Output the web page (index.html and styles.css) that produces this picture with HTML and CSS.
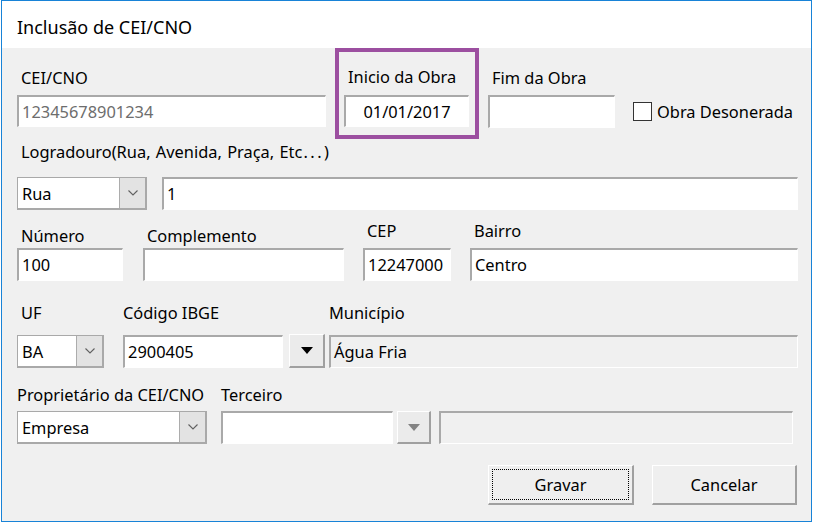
FILE: index.html
```html
<!DOCTYPE html>
<html lang="pt-BR">
<head>
<meta charset="utf-8">
<title>Inclusão de CEI/CNO</title>
<link rel="stylesheet" href="styles.css">
</head>
<body>
<div class="window">
  <div class="titlebar">Inclusão de CEI/CNO</div>
  <div class="content">
    <div class="row row1">
      <div class="field f-cei">
        <div class="label">CEI/CNO</div>
        <div class="input disabled-text">12345678901234</div>
      </div>
      <div class="highlight">
        <div class="label">Inicio da Obra</div>
        <div class="input center">01/01/2017</div>
      </div>
      <div class="field f-fim">
        <div class="label">Fim da Obra</div>
        <div class="input"></div>
      </div>
      <div class="check">
        <span class="box"></span>
        <span class="check-text">Obra Desonerada</span>
      </div>
    </div>

    <div class="row2">
      <div class="label">Logradouro(Rua<span class="wide-punct">,</span> Avenida<span class="wide-punct">,</span> Praça<span class="wide-punct">,</span> Etc<span class="dots">...</span>)</div>
      <div class="row">
        <div class="combo c-rua">
          <span class="combo-value">Rua</span>
          <span class="combo-btn"><svg width="10" height="6" viewBox="0 0 10 6"><polyline points="0.5,0.5 5,5 9.5,0.5" fill="none" stroke="#606060" stroke-width="1.1"/></svg></span>
        </div>
        <div class="input f-rua">1</div>
      </div>
    </div>

    <div class="row row3">
      <div class="field f-num">
        <div class="label lb-low">Número</div>
        <div class="input">100</div>
      </div>
      <div class="field f-comp">
        <div class="label lb-low">Complemento</div>
        <div class="input"></div>
      </div>
      <div class="field f-cep">
        <div class="label lb-high">CEP</div>
        <div class="input">12247000</div>
      </div>
      <div class="field f-bairro">
        <div class="label lb-high">Bairro</div>
        <div class="input">Centro</div>
      </div>
    </div>

    <div class="row row4">
      <div class="field f-uf">
        <div class="label lb-r4">UF</div>
        <div class="combo">
          <span class="combo-value">BA</span>
          <span class="combo-btn"><svg width="10" height="6" viewBox="0 0 10 6"><polyline points="0.5,0.5 5,5 9.5,0.5" fill="none" stroke="#606060" stroke-width="1.1"/></svg></span>
        </div>
      </div>
      <div class="field f-ibge">
        <div class="label lb-r4 tight">Código IBGE</div>
        <div class="input">2900405</div>
      </div>
      <div class="drop-btn d-ibge"><svg width="12" height="7" viewBox="0 0 12 7"><polygon points="0,0 12,0 6,7" fill="#000"/></svg></div>
      <div class="field f-mun">
        <div class="label lb-r4 tight">Município</div>
        <div class="input readonly">Água Fria</div>
      </div>
    </div>

    <div class="row row5">
      <div class="field f-prop">
        <div class="label lb-r5 tight">Proprietário da CEI/CNO</div>
        <div class="combo">
          <span class="combo-value">Empresa</span>
          <span class="combo-btn"><svg width="10" height="6" viewBox="0 0 10 6"><polyline points="0.5,0.5 5,5 9.5,0.5" fill="none" stroke="#606060" stroke-width="1.1"/></svg></span>
        </div>
      </div>
      <div class="field f-terc">
        <div class="label lb-r5 tight">Terceiro</div>
        <div class="input"></div>
      </div>
      <div class="drop-btn d-terc"><svg width="12" height="7" viewBox="0 0 12 7"><polygon points="0,0 12,0 6,7" fill="#838383"/></svg></div>
      <div class="input readonly f-wide"></div>
    </div>

    <div class="actions">
      <button class="btn btn-focus"><span class="focus-ring">Gravar</span></button>
      <button class="btn btn-cancel"><span class="focus-none">Cancelar</span></button>
    </div>
  </div>
</div>
</body>
</html>
```

FILE: styles.css
```css
* { box-sizing: border-box; }

html, body {
  margin: 0;
  padding: 0;
  background: #ffffff;
}

body {
  padding-left: 1px;
  font-family: "Noto Sans", "Open Sans", sans-serif;
  font-size: 16.4px;
  color: #000;
}

.window {
  width: 811px;
  height: 522px;
  border: 1px solid #1883d7;
  background: #f0f0f0;
  display: flex;
  flex-direction: column;
}

.titlebar {
  height: 47px;
  background: #ffffff;
  padding-left: 15px;
  font-size: 18px;
  line-height: 18px;
  padding-top: 17px;
}

.content {
  flex: 1;
  padding: 0 13px 0 15px;
}

.row {
  display: flex;
  align-items: flex-end;
}

.row1 { align-items: flex-start; }

.label {
  height: 20px;
  line-height: 20px;
  padding-left: 4px;
  white-space: nowrap;
}

.label.tight { padding-left: 0; }

.wide-punct { margin-right: 1px; }
.dots { letter-spacing: 2.5px; margin-left: 1px; }

.input {
  height: 33px;
  background: #fff;
  border-style: solid;
  border-width: 2px 1px 1px 2px;
  border-color: #a9a9a9 #ffffff #ffffff #a9a9a9;
  padding-left: 3px;
  line-height: 29px;
  white-space: nowrap;
  overflow: hidden;
}

.input.center { text-align: center; padding-left: 0; }
.input.disabled-text { color: #6d6d6d; }
.input.readonly { background: #f0f0f0; }

/* row 1 */
.f-cei { width: 309px; padding-top: 20px; }
.f-cei .label { margin-bottom: 7px; }
.f-cei .input { height: 32px; }

.highlight {
  margin-left: 9px;
  width: 144px;
  height: 91px;
  border: 4px solid #9c4fa0;
  padding: 15px 6px 0 5px;
}
.highlight .label { margin-bottom: 8px; }
.highlight .input { height: 32px; }

.f-fim { margin-left: 9px; width: 127px; padding-top: 20px; }
.f-fim .label { margin-bottom: 7px; }

.check {
  margin-left: 18px;
  margin-top: 54px;
  display: flex;
  align-items: center;
  height: 19px;
}
.check .box {
  width: 19px;
  height: 19px;
  background: #fff;
  border: 1px solid #333;
}
.check .check-text {
  margin-left: 5px;
  line-height: 19px;
  white-space: nowrap;
}

/* row 2 */
.row2 { margin-top: 3px; }
.row2 > .label { margin-bottom: 15px; }

.combo {
  height: 33px;
  background: #fff;
  border: 1px solid #a9a9a9;
  border-right-width: 2px;
  border-bottom-width: 2px;
  display: flex;
}
.combo-value {
  flex: 1;
  padding-left: 4px;
  line-height: 31px;
  white-space: nowrap;
}
.combo-btn {
  width: 26px;
  background: #e3e3e3;
  border-left: 1px solid #acacac;
  display: flex;
  align-items: center;
  justify-content: center;
}

.c-rua { width: 130px; }
.f-rua { margin-left: 15px; flex: 1; }

/* row 3 */
.row3 { margin-top: 11px; }
.lb-low { margin-bottom: 2px; }
.lb-high { margin-bottom: 7px; }
.f-num { width: 106px; }
.f-comp { margin-left: 20px; width: 201px; }
.f-cep { margin-left: 19px; width: 88px; }
.f-bairro { margin-left: 19px; flex: 1; }

/* row 4 */
.row4 { margin-top: 22px; }
.lb-r4 { margin-bottom: 12px; }
.f-uf { width: 87px; }
.f-ibge { margin-left: 19px; width: 160px; }
.f-mun { margin-left: 4px; flex: 1; }

.drop-btn {
  height: 34px;
  background: #ebebeb;
  border-style: solid;
  border-width: 1px 2px 2px 1px;
  border-color: #ffffff #a0a0a0 #a0a0a0 #ffffff;
  display: flex;
  align-items: center;
  justify-content: center;
}
.d-ibge { margin-left: 6px; width: 36px; }

/* row 5 */
.row5 { margin-top: 17px; }
.lb-r5 { margin-bottom: 6px; }
.f-prop { width: 190px; }
.f-terc { margin-left: 14px; width: 172px; }
.d-terc { margin-left: 4px; width: 34px; height: 33px; }
.f-wide { margin-left: 8px; width: 354px; }

/* actions */
.actions {
  margin-top: 21px;
  display: flex;
  justify-content: flex-end;
  gap: 18px;
  padding-right: 1px;
}

.btn {
  height: 40px;
  background: #efefef;
  border-style: solid;
  border-width: 1px 2px 2px 1px;
  border-color: #ffffff #a0a0a0 #a0a0a0 #ffffff;
  font-family: "Noto Sans", "Open Sans", sans-serif;
  font-size: 16.4px;
  color: #000;
  padding: 3px;
  display: flex;
}
.btn-focus { width: 146px; }
.btn-cancel { width: 145px; }

.focus-ring, .focus-none {
  flex: 1;
  display: flex;
  align-items: center;
  justify-content: center;
  border: 1px dotted transparent;
}
.focus-ring { border-color: #000; }
```
